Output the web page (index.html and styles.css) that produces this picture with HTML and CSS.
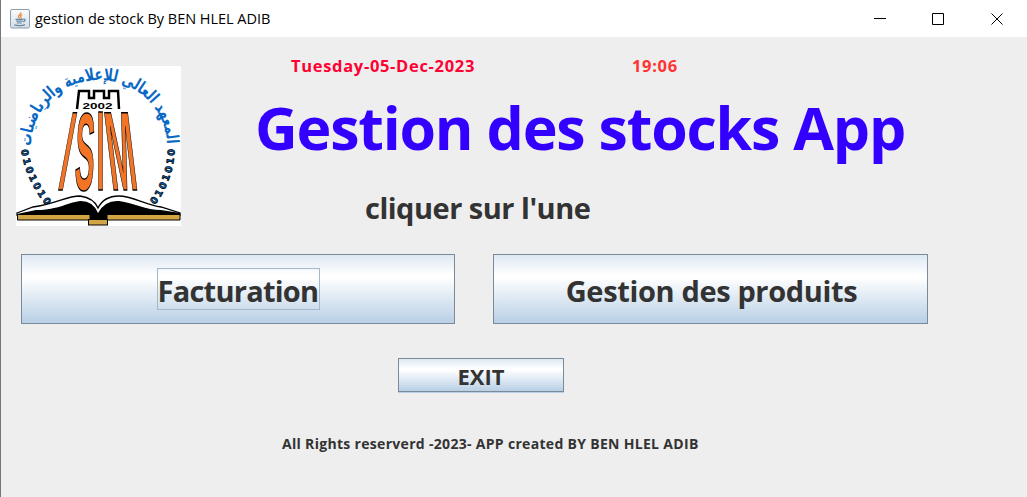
FILE: index.html
```html
<!DOCTYPE html>
<html lang="fr">
<head>
<meta charset="utf-8">
<title>gestion de stock By BEN HLEL ADIB</title>
<link rel="stylesheet" href="styles.css">
</head>
<body>
<div class="window">
  <header class="titlebar">
    <svg class="app-icon" width="20" height="20" viewBox="0 0 20 20">
      <defs><linearGradient id="ig" x1="0" y1="0" x2="0" y2="1"><stop offset="0" stop-color="#fafcfd"/><stop offset="1" stop-color="#d3dde6"/></linearGradient></defs>
      <rect x=".5" y=".5" width="19" height="18.5" rx="1.5" fill="url(#ig)" stroke="#8c9db0"/>
      <path d="M10.8 3.2c.6 2-3 3-2.300 4.700.3.800 1.100 1.300 1.100 1.300M12.300 5.500c-2 1-2 1.700-1.300 2.700.4.700-.4 1.200-.4 1.200" fill="none" stroke="#e8893c" stroke-width="1.300"/>
      <path d="M5.500 10.300h7.500M6.200 12.200h6.300M6.800 14h5M4.200 15.800c3 1.200 8.500 1 10.800-.2M13.300 10.300c2.500-.6 2.300 2-.3 2.400" fill="none" stroke="#6688a3" stroke-width="1.200"/>
    </svg>
    <span class="caption">gestion de stock By BEN HLEL ADIB</span>
    <svg class="controls" width="130" height="14" viewBox="0 0 130 14" fill="none" stroke="#000">
      <path d="M0 6.500h12M58.500 1.500h11v11h-11zM117.500 1.500l11 11M128.500 1.500l-11 11"/>
    </svg>
  </header>
  <main class="panel">
    <section class="top">
      <svg class="logo" width="165" height="160" viewBox="0 0 165 160">
        <defs>
          <path id="arc" d="M15 80A68 66 0 0 1 151 80"/>
          <path id="arcL" d="M5 84Q9 113 31 141"/>
          <path id="arcR" d="M139 139Q158 114 159 80"/>
        </defs>
        <rect width="165" height="160" fill="#fff"/>
        <text class="arabic"><textPath href="#arc" textLength="208" lengthAdjust="spacingAndGlyphs">المعهد العالي للإعلامية والرياضيات</textPath></text>
        <text class="bits"><textPath href="#arcL" textLength="62">0101010</textPath></text>
        <text class="bits"><textPath href="#arcR" textLength="60">0101010</textPath></text>
        <path d="M61 43L63 25H73V32H78V25H88V32H93V25H102L103 43" fill="none" stroke="#000" stroke-width="2.500"/>
        <text class="year" x="66.500" y="43" textLength="30" lengthAdjust="spacingAndGlyphs">2002</text>
        <g class="isim">
          <text transform="matrix(.28 0 -.2 1.080 40.500 124)">I</text>
          <text transform="matrix(.28 0 -.04 1.060 58 123.500)">S</text>
          <text transform="matrix(.28 0 0 1.080 80.500 124)">I</text>
          <text transform="matrix(.32 0 .13 1.080 95.500 124)">M</text>
        </g>
        <path d="M1 147L17 141C40 138 50 130 64 130Q78 132 82 142Q88 130 103 130C116 130 130 139 145 141L164 147V149H1Z" fill="#fff" stroke="#000" stroke-width="1.300"/>
        <path d="M1 148L20 144C43 144 52 136 65 135Q77 135 82 147Q89 134 103 135C118 137 130 144 145 144L164 147V149H1Z" fill="#000"/>
        <path d="M1.500 148.500H74V154H1.500ZM91 148.500H164V154H91Z" fill="#d2a544" stroke="#000"/>
        <path d="M74 148H91V153H74Z" fill="#000"/>
        <rect x="72.500" y="153.500" width="19" height="5.500" fill="#d2a544" stroke="#000"/>
      </svg>
      <div class="heading">
        <div class="clock"><span class="date">Tuesday-05-Dec-2023</span><span class="time">19:06</span></div>
        <h1 class="title">Gestion des stocks App</h1>
        <p class="hint">cliquer sur l'une</p>
      </div>
    </section>
    <section class="choices">
      <button class="btn invoicing"><span class="focus">Facturation</span></button>
      <button class="btn products"><span>Gestion des produits</span></button>
    </section>
    <button class="btn exit"><span>EXIT</span></button>
    <p class="rights">All Rights reserverd -2023- APP created BY BEN HLEL ADIB</p>
  </main>
</div>
</body>
</html>
```
FILE: styles.css
```css
* { box-sizing: border-box; }
body { margin: 0; font-family: "Open Sans", "Noto Sans", sans-serif; color: #333; }
.window { width: 1027px; height: 497px; overflow: hidden; background: #eee; border-left: 1px solid #777; }
.titlebar { display: flex; align-items: center; height: 37px; padding: 0 23px 0 9px; background: #fff; color: #000; }
.app-icon { margin-right: 5px; }
.caption { font-size: 14.500px; letter-spacing: -.03px; white-space: nowrap; }
.controls { margin-left: auto; }
.panel { display: flex; flex-direction: column; font-weight: 700; }
.top { display: flex; height: 217px; padding: 29px 0 0 15px; }
.logo { flex: none; }
.heading { flex: 1; padding-left: 74px; white-space: nowrap; }
.clock { display: flex; margin-top: -12px; padding-left: 36px; font-size: 16.500px; line-height: 24px; letter-spacing: .68px; }
.date { width: 341px; color: #ff0033; }
.time { color: #ff3333; }
.title { margin: 9px 0 0; font-size: 59px; line-height: 80px; letter-spacing: -1.200px; color: #3300ff; }
.hint { margin: 21px 0 0 110px; font-size: 29px; line-height: 40px; letter-spacing: -.5px; }
.choices { display: flex; gap: 38px; padding-left: 20px; }
.btn { display: flex; align-items: center; justify-content: center; width: 435px; height: 70px; padding: 0; border: 1px solid #7a8a99; background: linear-gradient(#dde8f3, #fff 30%, #fff 33%, #b8cfe5); color: #333; font: 700 29px/40px "Open Sans", "Noto Sans", sans-serif; white-space: nowrap; }
.invoicing { width: 434px; letter-spacing: -.75px; }
.focus { border: 1px solid #a3b8cc; height: 42px; width: 163px; padding-top: 2px; text-align: left; }
.products { padding: 4px 0 0 2px; letter-spacing: -.36px; }
.exit { width: 166px; height: 34px; margin: 34px 0 0 397px; padding-top: 2px; font-size: 22px; box-shadow: 0 1px #b8cfe5; }
.rights { margin: 42px 0 0 281px; font-size: 14px; line-height: 20px; letter-spacing: .31px; white-space: nowrap; }
.arabic { font: 700 17px "DejaVu Sans", sans-serif; fill: #0868c4; }
.bits { font: 700 9.500px "DejaVu Sans", sans-serif; fill: #0868c4; stroke: #000; stroke-width: .7px; }
.year { font: 700 8.500px "Liberation Sans", sans-serif; fill: #000; }
.isim { font: 700 104px "Liberation Sans", sans-serif; fill: #f37424; stroke: #000; stroke-width: 1.500px; }
```
